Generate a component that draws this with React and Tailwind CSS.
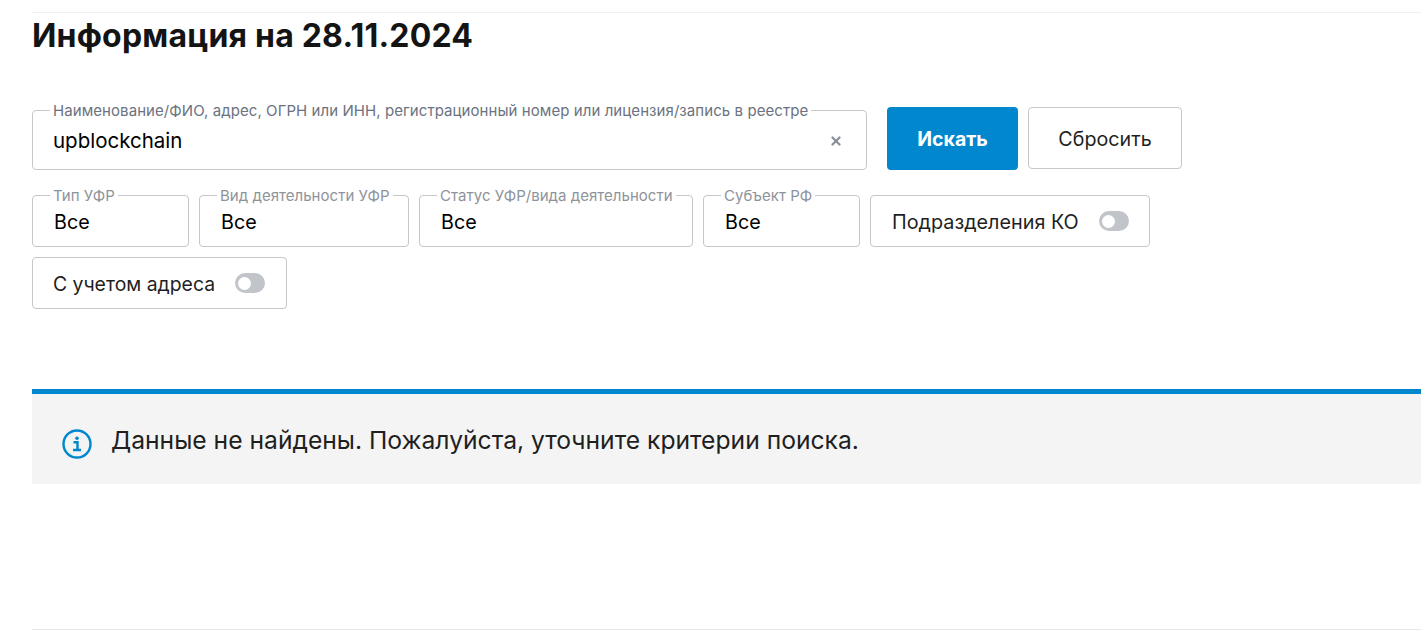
import { X } from 'lucide-react';

function Field({ label, value, className }) {
  return (
    <div className={`relative h-[52px] rounded border border-[#c5c7cb] bg-white pl-[21px] pt-[14px] ${className}`}>
      <span className="absolute -top-[9px] left-[17px] bg-white px-[3px] text-[15px] leading-[17px] tracking-[0.03px] text-[#8e939b] whitespace-nowrap">{label}</span>
      <span className="text-[19.7px] leading-[24px] text-black">{value}</span>
    </div>
  );
}

function Toggle({ label, className, textClass }) {
  return (
    <div className={`flex h-[52px] items-center rounded border border-[#c5c7cb] bg-white ${className}`}>
      <span className={`mt-[2px] leading-[24px] text-[#1f1f1f] whitespace-nowrap ${textClass}`}>{label}</span>
      <span className="ml-[20px] flex h-[20px] w-[30px] items-center rounded-full bg-[#c1c4c9] pl-[3px]">
        <span className="h-[13px] w-[13px] rounded-full bg-white" />
      </span>
    </div>
  );
}

export default function App() {
  return (
    <div className="h-[636px] w-[1421px] overflow-hidden bg-white pl-8 pt-3 font-['Inter','Liberation_Sans',sans-serif]">
      <div className="h-px bg-[#f0f0f0]" />
      <h1 className="mt-[4px] text-[32px] font-bold leading-[38px] tracking-[0.2px] text-[#141414]">Информация на 28.11.2024</h1>

      <div className="mt-[52px] flex items-start">
        <div className="relative mt-[3px] flex h-[60px] w-[835px] items-center justify-between rounded border border-[#c5c7cb] bg-white pl-[20px] pr-[23px] pt-[2px]">
          <span className="absolute -top-[9px] left-[17px] bg-white px-[3px] text-[15px] leading-[17px] tracking-[0.07px] text-[#6b7280] whitespace-nowrap">
            Наименование/ФИО, адрес, ОГРН или ИНН, регистрационный номер или лицензия/запись в реестре
          </span>
          <span className="text-[20.5px] leading-[24px] text-black">upblockchain</span>
          <X size={14} strokeWidth={4} className="text-[#8b9099]" />
        </div>
        <button className="ml-5 h-[63px] w-[131px] rounded bg-[#0087cd] pt-[2px] text-[19.5px] font-bold text-white">Искать</button>
        <button className="ml-[10px] h-[62px] w-[154px] rounded border border-[#c5c7cb] bg-white pt-[4px] text-[19.7px] text-[#1f1f1f]">Сбросить</button>
      </div>

      <div className="mt-[25px] flex w-[1150px] flex-wrap gap-[10px]">
        <Field label="Тип УФР" value="Все" className="w-[157px]" />
        <Field label="Вид деятельности УФР" value="Все" className="w-[210px]" />
        <Field label="Статус УФР/вида деятельности" value="Все" className="w-[274px]" />
        <Field label="Субъект РФ" value="Все" className="w-[157px]" />
        <Toggle label="Подразделения КО" className="w-[280px] pl-[21px]" textClass="text-[19.8px]" />
        <Toggle label="С учетом адреса" className="w-[255px] pl-[20px]" textClass="text-[19.4px]" />
      </div>

      <div className="mt-[80px] flex h-[95px] items-center border-t-[5px] border-[#0087cd] bg-[#f4f4f4] pl-[30px]">
        <svg width="30" height="30" viewBox="0 0 30 30" fill="none" className="mt-[10px] shrink-0">
          <circle cx="15" cy="15" r="13.5" stroke="#0087cd" strokeWidth="2.4" />
          <circle cx="15" cy="9.2" r="1.8" fill="#0087cd" />
          <path d="M11.5 13.2H15.5V20.6M11 21H19" stroke="#0087cd" strokeWidth="2.4" />
        </svg>
        <span className="ml-[19px] mt-[2px] text-[24.65px] leading-[30px] text-[#1f1f1f]">Данные не найдены. Пожалуйста, уточните критерии поиска.</span>
      </div>

      <div className="mt-[145px] h-px bg-[#e8e8e8]" />
    </div>
  );
}
